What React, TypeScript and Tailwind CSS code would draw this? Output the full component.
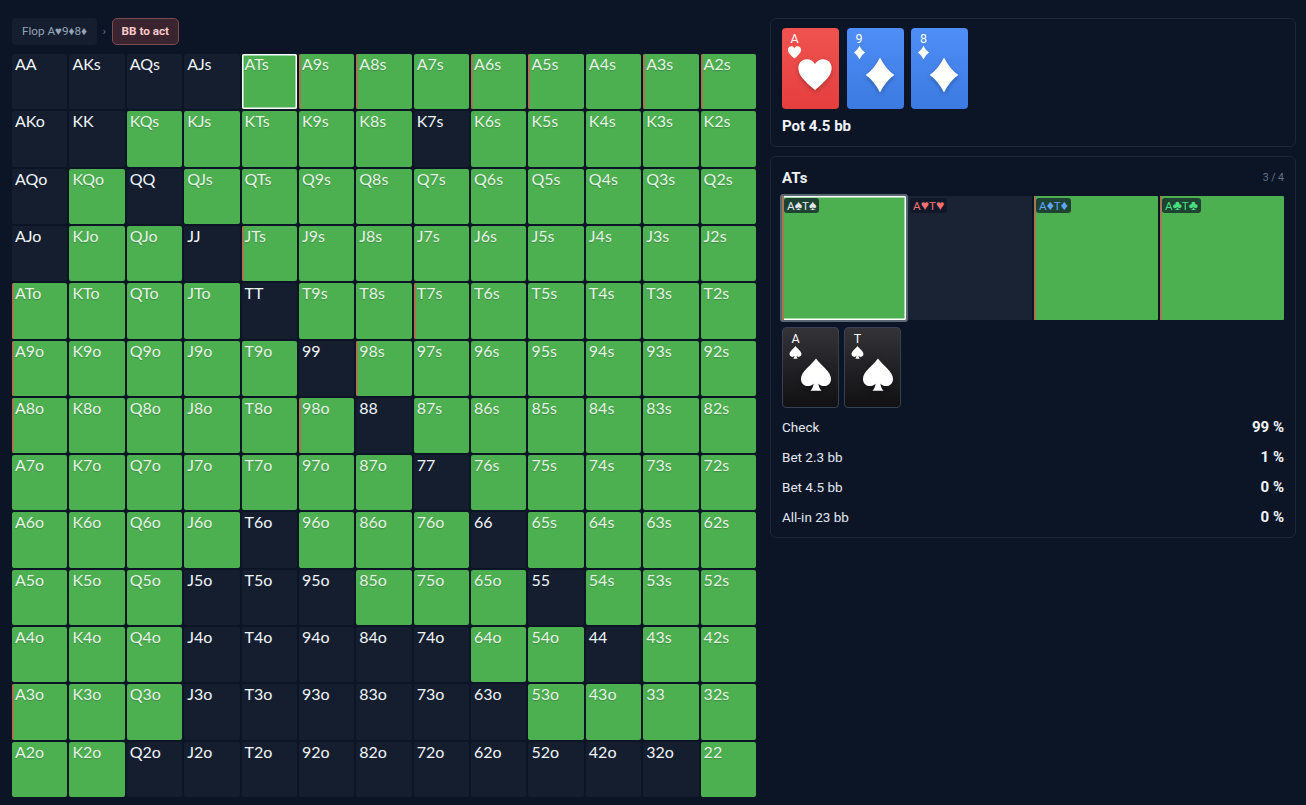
const R = "AKQJT98765432".split("");
const F = new Set(
  `KQs KJs KTs K9s K8s K6s K5s K4s K3s K2s
  ATs A9s A8s A7s A6s A5s A4s A3s A2s
  KQo QJs QTs Q9s Q8s Q7s Q6s Q5s Q4s Q3s Q2s
  KJo QJo JTs J9s J8s J7s J6s J5s J4s J3s J2s
  ATo KTo QTo JTo T9s T8s T7s T6s T5s T4s T3s T2s
  A9o K9o Q9o J9o T9o 98s 97s 96s 95s 94s 93s 92s
  A8o K8o Q8o J8o T8o 98o 87s 86s 85s 84s 83s 82s
  A7o K7o Q7o J7o T7o 97o 87o 76s 75s 74s 73s 72s
  A6o K6o Q6o J6o 96o 86o 76o 65s 64s 63s 62s
  A5o K5o Q5o 85o 75o 65o 54s 53s 52s
  A4o K4o Q4o 64o 54o 43s 42s
  A3o K3o Q3o 53o 43o 33 32s
  A2o K2o 22`.split(/\s+/)
);
const MIX = new Set("A9s A8s A6s A5s A3s A2s JTs T7s 98s ATo A9o A8o A3o 98o".split(" "));

function label(r: number, c: number) {
  if (r === c) return R[r] + R[c];
  return r < c ? R[r] + R[c] + "s" : R[c] + R[r] + "o";
}

function Cell({ name }: { name: string }) {
  const on = F.has(name);
  const sel = name === "ATs";
  return (
    <div className={`relative overflow-hidden rounded-[2px] px-[3px] text-[16px] leading-[20px] ${on ? "bg-[#4caf50] text-[#e6f2e6] [text-shadow:0_1px_1px_rgba(0,0,0,0.2)]" : "bg-[#141e2f] text-[#f1f5f9]"} ${sel ? "ring-[1.5px] ring-inset ring-white" : ""}`}>
      {MIX.has(name) && <div className="absolute inset-y-0 left-0 w-[2px] bg-[#a5784f]" />}
      <span className="relative">{name}</span>
    </div>
  );
}

const PATHS: Record<string, string> = {
  h: "M12 21.5C5 15.5 1.5 12 1.5 7.5 1.5 4 4.2 2 7 2c2 0 3.9 1 5 3 1.1-2 3-3 5-3 2.8 0 5.5 2 5.5 5.5 0 4.500-3.500 8-10.500 14z",
  d: "M12 1C14.500 6 17.500 9.500 21 12 17.500 14.500 14.500 18 12 23 9.500 18 6.500 14.500 3 12 6.500 9.500 9.500 6 12 1z",
  s: "M12 1.500C15 6 21.500 9.500 21.500 14.500c0 2.800-2.100 4.500-4.300 4.500-1.500 0-2.800-.6-3.700-1.700.2 1.900.8 3.200 2 4.700H8.500c1.200-1.500 1.800-2.800 2-4.700-.9 1.100-2.200 1.700-3.700 1.700-2.200 0-4.300-1.700-4.300-4.500C2.500 9.500 9 6 12 1.500z",
};

function Suit({ s, size, className = "" }: { s: string; size: number; className?: string }) {
  return (
    <svg viewBox="0 0 24 24" width={size} height={size} fill="white" className={className}>
      <path d={PATHS[s]} />
    </svg>
  );
}

function PlayingCard({ rank, s, bg }: { rank: string; s: string; bg: string }) {
  return (
    <div className={`relative h-[81px] w-[57px] shrink-0 rounded-[4px] ${bg}`}>
      <div className="absolute left-[4px] top-[3px] flex w-[17px] flex-col items-center">
        <span className="text-[12.500px] leading-[15px] text-white">{rank}</span>
        <Suit s={s} size={15} className="-mt-[1px]" />
      </div>
      <Suit s={s} size={38} className="absolute left-[14px] top-[28px] drop-shadow-[0_2px_2px_rgba(0,0,0,0.25)]" />
    </div>
  );
}

const COMBOS = [
  { s: "♠", c: "text-[#e2e8f0]", on: true, sel: true },
  { s: "♥", c: "text-[#f87171]", on: false, sel: false },
  { s: "♦", c: "text-[#60a5fa]", on: true, sel: false },
  { s: "♣", c: "text-[#4ade80]", on: true, sel: false },
];

const ACTIONS = [
  ["Check", "99 %"],
  ["Bet 2.3 bb", "1 %"],
  ["Bet 4.5 bb", "0 %"],
  ["All-in 23 bb", "0 %"],
];

export default function App() {
  return (
    <div className="flex h-[805px] w-[1306px] gap-[14px] overflow-hidden bg-[#0b1526] pl-[12px] pr-[10px] pt-[18px] font-['Roboto',sans-serif] text-[#f1f5f9]">
      <div className="flex w-[744px] shrink-0 flex-col">
        <div className="flex h-[36px] items-start gap-[5.500px] text-[11.700px]">
          <div className="flex h-[27px] items-center rounded-[4px] bg-[#141e2f] px-[10px] text-[#94a3b8]">Flop A♥9♦8♦</div>
          <span className="flex h-[27px] items-center text-[#64748b]">›</span>
          <div className="flex h-[27px] items-center rounded-[5px] border border-[#7f4a50] bg-[#3a2430] px-[9px] font-bold text-[#fecaca]">BB to act</div>
        </div>
        <div className="grid h-[743px] grid-cols-13 grid-rows-13 gap-[2px] font-['Lato',sans-serif]">
          {R.flatMap((_, r) => R.map((_, c) => <Cell key={`${r}-${c}`} name={label(r, c)} />))}
        </div>
      </div>
      <div className="flex flex-1 flex-col gap-[9px]">
        <div className="h-[129px] rounded-[6px] border border-[#1c2738] px-[11px] pt-[9px]">
          <div className="flex gap-[7.500px]">
            <PlayingCard rank="A" s="h" bg="bg-gradient-to-b from-[#ef5350] to-[#e53e3e]" />
            <PlayingCard rank="9" s="d" bg="bg-gradient-to-b from-[#4f8ef7] to-[#3b7ae0]" />
            <PlayingCard rank="8" s="d" bg="bg-gradient-to-b from-[#4f8ef7] to-[#3b7ae0]" />
          </div>
          <div className="mt-[8px] text-[15px] font-bold leading-[18px]">Pot 4.5 bb</div>
        </div>
        <div className="h-[382px] rounded-[6px] border border-[#1c2738] px-[11px] pt-[12px]">
          <div className="flex items-center justify-between">
            <span className="text-[15px] font-bold leading-[18px]">ATs</span>
            <span className="text-[10.500px] text-[#64748b]">3 / 4</span>
          </div>
          <div className="mt-[9px] grid grid-cols-4 gap-[2px]">
            {COMBOS.map((x) => (
              <div key={x.s} className={`relative h-[124px] rounded-[1px] ${x.on ? "bg-[#4caf50]" : "bg-[#1a2333]"} ${x.sel ? "outline-[2.500px] outline-[#5b6675] ring-[1.5px] ring-inset ring-white" : ""}`}>
                {x.on && <div className="absolute inset-y-0 left-0 w-[1.5px] bg-[#a5784f]" />}
                <span className={`absolute left-[2px] top-[2px] rounded-[3px] bg-[#0b1526]/70 px-[3px] text-[11.700px] leading-[14px] ${x.c}`}>
                  A<span className="text-[14px]">{x.s}</span>T<span className="text-[14px]">{x.s}</span>
                </span>
              </div>
            ))}
          </div>
          <div className="mt-[7px] flex gap-[5px]">
            <PlayingCard rank="A" s="s" bg="border border-[#374151] bg-gradient-to-b from-[#333338] to-[#111114]" />
            <PlayingCard rank="T" s="s" bg="border border-[#374151] bg-gradient-to-b from-[#333338] to-[#111114]" />
          </div>
          <div className="mt-[4px] flex flex-col">
            {ACTIONS.map(([a, v]) => (
              <div key={a} className="flex h-[30px] items-center justify-between pt-[1px]">
                <span className="text-[13.500px] text-[#e2e8f0]">{a}</span>
                <span className="text-[15px] font-bold">{v}</span>
              </div>
            ))}
          </div>
        </div>
      </div>
    </div>
  );
}
